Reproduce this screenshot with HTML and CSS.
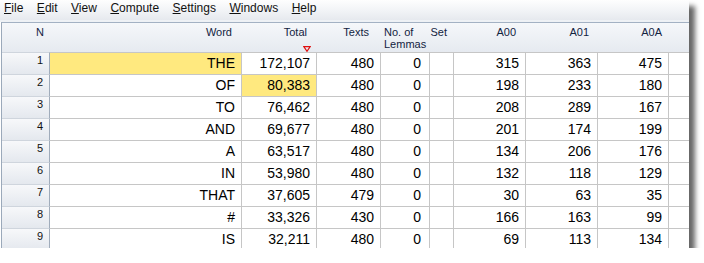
FILE: index.html
```html
<!DOCTYPE html>
<html lang="en">
<head>
  <meta charset="UTF-8" />
  <title>Word list</title>
  <link rel="stylesheet" href="styles.css">
</head>
<body>
  <div class="window">
    <!-- menu -->
    <div class="menubar">
      <span class="menu"><u>F</u>ile</span>
      <span class="menu"><u>E</u>dit</span>
      <span class="menu"><u>V</u>iew</span>
      <span class="menu"><u>C</u>ompute</span>
      <span class="menu"><u>S</u>ettings</span>
      <span class="menu"><u>W</u>indows</span>
      <span class="menu"><u>H</u>elp</span>
    </div>
    <div class="menu-sep"></div>

    <!-- grid -->
    <div class="sheet">
      <div class="row head">
        <div class="hd hd-n">N</div>
        <div class="hd">Word</div>
        <div class="hd">Total
          <svg class="sort" width="8" height="6" viewBox="0 0 8 6"><path d="M0.8 0.7 H7.2 L4 5.3 Z" fill="none" stroke="#e01010" stroke-width="1.2"/></svg>
        </div>
        <div class="hd hd-texts">Texts</div>
        <div class="hd hd-left">No. of<br>Lemmas</div>
        <div class="hd hd-set">Set</div>
        <div class="hd">A00</div>
        <div class="hd hd-a01">A01</div>
        <div class="hd hd-a0a">A0A</div>
        <div class="hd"></div>
      </div>

      <div class="row">
        <div class="cell num">1</div><div class="cell hl">THE</div><div class="cell">172,107</div><div class="cell">480</div><div class="cell lem">0</div><div class="cell"></div><div class="cell">315</div><div class="cell">363</div><div class="cell">475</div><div class="cell end"></div>
      </div>
      <div class="row">
        <div class="cell num">2</div><div class="cell">OF</div><div class="cell hl">80,383</div><div class="cell">480</div><div class="cell lem">0</div><div class="cell"></div><div class="cell">198</div><div class="cell">233</div><div class="cell">180</div><div class="cell end"></div>
      </div>
      <div class="row">
        <div class="cell num">3</div><div class="cell">TO</div><div class="cell">76,462</div><div class="cell">480</div><div class="cell lem">0</div><div class="cell"></div><div class="cell">208</div><div class="cell">289</div><div class="cell">167</div><div class="cell end"></div>
      </div>
      <div class="row">
        <div class="cell num">4</div><div class="cell">AND</div><div class="cell">69,677</div><div class="cell">480</div><div class="cell lem">0</div><div class="cell"></div><div class="cell">201</div><div class="cell">174</div><div class="cell">199</div><div class="cell end"></div>
      </div>
      <div class="row">
        <div class="cell num">5</div><div class="cell">A</div><div class="cell">63,517</div><div class="cell">480</div><div class="cell lem">0</div><div class="cell"></div><div class="cell">134</div><div class="cell">206</div><div class="cell">176</div><div class="cell end"></div>
      </div>
      <div class="row">
        <div class="cell num">6</div><div class="cell">IN</div><div class="cell">53,980</div><div class="cell">480</div><div class="cell lem">0</div><div class="cell"></div><div class="cell">132</div><div class="cell">118</div><div class="cell">129</div><div class="cell end"></div>
      </div>
      <div class="row">
        <div class="cell num">7</div><div class="cell">THAT</div><div class="cell">37,605</div><div class="cell">479</div><div class="cell lem">0</div><div class="cell"></div><div class="cell">30</div><div class="cell">63</div><div class="cell">35</div><div class="cell end"></div>
      </div>
      <div class="row">
        <div class="cell num">8</div><div class="cell">#</div><div class="cell">33,326</div><div class="cell">430</div><div class="cell lem">0</div><div class="cell"></div><div class="cell">166</div><div class="cell">163</div><div class="cell">99</div><div class="cell end"></div>
      </div>
      <div class="row">
        <div class="cell num">9</div><div class="cell">IS</div><div class="cell">32,211</div><div class="cell">480</div><div class="cell lem">0</div><div class="cell"></div><div class="cell">69</div><div class="cell">113</div><div class="cell">134</div><div class="cell end"></div>
      </div>
    </div>
  </div>
</body>
</html>
```

FILE: styles.css
```css
* {
  margin: 0; padding: 0; box-sizing: border-box;
}

html, body {
  background: #fff;
  font-family: "Liberation Sans", Arial, sans-serif;
  color: #000;
}

.window {
  width: 689px;
  height: 248px;
  overflow: hidden;
  background: #fff;
  box-shadow: 6px 6px 5px rgba(0, 0, 0, 0.6);
}

/* menu bar */
.menubar {
  height: 20px;
  display: flex;
  align-items: flex-start;
  gap: 13.5px;
  padding-left: 4px;
  background: linear-gradient(#fefefe, #f1f3f6 55%, #e6e9ee);
}

.menu {
  font-size: 12px;
  line-height: 17px;
  color: #111;
}

.menu u {
  text-decoration-thickness: 1px;
  text-underline-offset: 1px;
}

.menu-sep {
  height: 2px;
  background: #eef1f5;
}

/* grid */
.sheet {
  margin-left: 1px;
  border-left: 1px solid #9ba9ba;
  border-top: 1px solid #a3b1c3;
}

.row {
  display: grid;
  grid-template-columns: 48px 192px 75px 64px 49px 24px 72px 72px 71px 20px;
  height: 22px;
}

.row.head {
  height: 29px;
  background: linear-gradient(#f5f7fa, #e6eaf0);
}

.hd {
  font-size: 11px;
  line-height: 12px;
  padding: 3px 10px 0 0;
  text-align: right;
  color: #13233f;
  white-space: nowrap;
}

.hd-n { padding-right: 6px; }
.hd-texts { padding-right: 12px; }
.hd-set { padding-right: 7px; }
.hd-a01 { padding-right: 9px; }
.hd-a0a { padding-right: 7px; }

.hd-left {
  text-align: left;
  padding-left: 3px;
  padding-right: 0;
}

.sort {
  display: block;
  margin: 8px -4px 0 auto;
}

.cell {
  border-top: 1px solid #c6c6c6;
  border-right: 1px solid #c6c6c6;
  font-size: 14px;
  line-height: 21px;
  text-align: right;
  padding-right: 6px;
  white-space: nowrap;
}

.cell.lem { padding-right: 8px; }
.cell.end { border-right: none; }

.cell.hl {
  background: #ffe97f;
}

.cell.num {
  font-size: 11px;
  line-height: 12px;
  padding-top: 1px;
  color: #111;
  background: linear-gradient(#f7f8fa, #e4e8ee);
  border-top-color: #cfd5dd;
  border-right-color: #a0acbb;
}
```
